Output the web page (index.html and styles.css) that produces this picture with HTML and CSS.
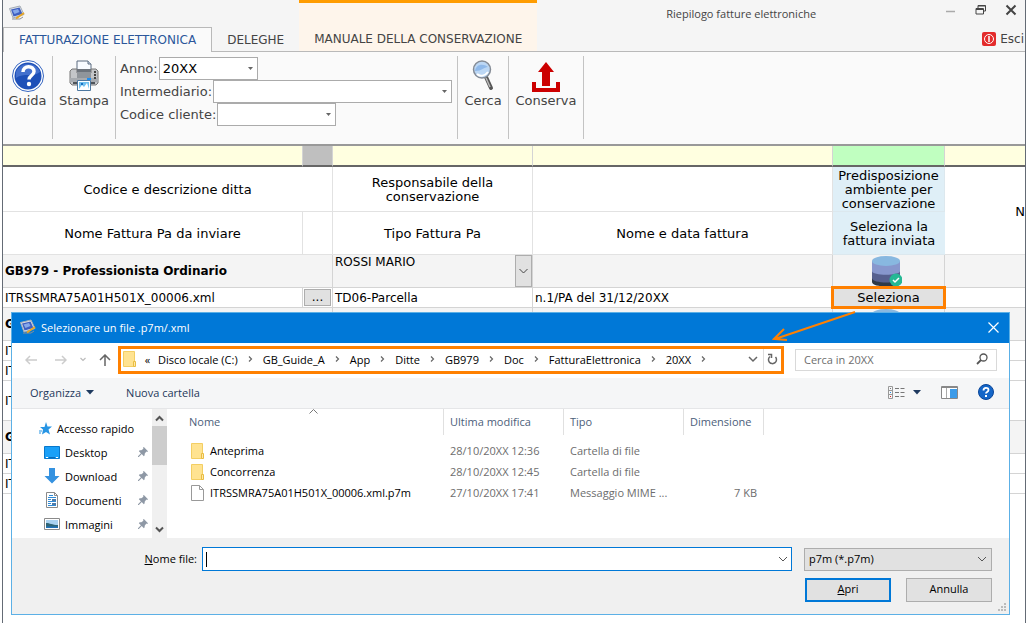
FILE: index.html
```html
<!DOCTYPE html>
<html lang="it">
<head>
    <meta charset="UTF-8">
    <meta name="viewport" content="width=device-width, initial-scale=1.0">
    <title>Riepilogo fatture elettroniche</title>
    <link rel="stylesheet" href="styles.css">
</head>
<body>
    <!-- Shared symbols -->
    <svg class="symbols" aria-hidden="true">
        <symbol id="app" viewBox="0 0 16 16">
            <path d="M.5 3.500 11 1l4 8.500L4 13z" fill="#dfe4ea" stroke="#a4acb5"/>
            <path d="M2 4.500 10.500 2.500 13.500 9 4.500 11.500z" fill="#3f5fc0"/>
            <path d="M3.500 5.500 9 4l1.500 3-5 2z" fill="#86a8ea"/>
            <path d="M3 14h8l3-2" fill="none" stroke="#8b8f96"/>
            <path d="M7 13.500 15 8" stroke="#e8a727" stroke-width="2"/>
        </symbol>
        <symbol id="folder" viewBox="0 0 14 16">
            <path d="M.5.5h11v15H.5z" fill="#ffe391" stroke="#f3ce63"/>
            <path d="M10.500 15.500v-5h2v5z" fill="#ffe9a8" stroke="#e9bd42"/>
        </symbol>
        <symbol id="crumb" viewBox="0 0 5 6">
            <path d="M1 .5 3.500 3 1 5.500" fill="none" stroke="#666" stroke-width="1.200"/>
        </symbol>
        <symbol id="pin" viewBox="0 0 12 12">
            <path d="M7 0l5 5-1 1-1-.5L8 8v2l-1 1-2.500-2.500L1 12H0v-1l3.500-3.500L1 5l1-1h2l2.500-2L6 1z" fill="#8e98a5"/>
        </symbol>
        <symbol id="database" viewBox="0 0 32 32">
            <path d="M2 23v4c0 6 28 6 28 0v-5z" fill="#2e3a47"/>
            <path d="M2 16v7c0 6 28 6 28 0v-7z" fill="#56608f"/>
            <path d="M2 6v10c0 5 28 5 28 0V6z" fill="#8797cd"/>
            <ellipse cx="16" cy="6" rx="14" ry="5" fill="#88b8e0"/>
            <circle cx="26" cy="25" r="6.500" fill="#25b894"/>
            <path d="M23 25l2 2 4-4" fill="none" stroke="#fff" stroke-width="1.500"/>
        </symbol>
    </svg>

    <div class="window">
        <header class="titlebar">
            <div class="title-left">
                <svg class="app-icon"><use href="#app"/></svg>
                <nav class="tabs">
                    <a href="#" class="tab active">FATTURAZIONE ELETTRONICA</a>
                    <a href="#" class="tab">DELEGHE</a>
                </nav>
            </div>
            <a href="#" class="tab manual">MANUALE DELLA CONSERVAZIONE</a>
            <h1>Riepilogo fatture elettroniche</h1>
            <div class="title-right">
                <div class="controls">
                    <button aria-label="Riduci a icona"><svg width="12" height="12"><path d="M1 7.500h9" stroke="#aaa" stroke-width="1.500"/></svg></button>
                    <button aria-label="Ripristina"><svg width="12" height="12"><path d="M1 4.500h7.500v5.500H1zM3 4V1.500h7.500V7H9M1 5.500h7.500M3 2h7.500" fill="none" stroke="#444"/></svg></button>
                    <button aria-label="Chiudi"><svg width="12" height="12"><path d="M1.500 1.500l9 9m0-9l-9 9" stroke="#444" stroke-width="2"/></svg></button>
                </div>
                <button class="exit">
                    <svg width="14" height="14"><rect width="14" height="14" rx="2" fill="#e32b2b"/><circle cx="7" cy="7" r="4.500" fill="none" stroke="#fff"/><path d="M7 4v6" stroke="#fff" stroke-width="1.500"/></svg>
                    Esci
                </button>
            </div>
        </header>

        <div class="ribbon">
            <button class="tool guide">
                <svg viewBox="0 0 32 32">
                    <circle cx="16" cy="16" r="15.500" fill="#fff" stroke="#3565c0"/>
                    <circle cx="16" cy="16" r="13.500" fill="#1e50b8"/>
                    <path d="M4 12a13 13 0 0 1 24 0c-8 6-16 0-24 6z" fill="#5c86da" opacity=".6"/>
                    <path d="M11 12c0-7 11-7 11-.500 0 4-5 4-5 8" fill="none" stroke="#fff" stroke-width="3.500"/>
                    <circle cx="17" cy="24" r="2.200" fill="#fff"/>
                </svg>
                Guida
            </button>
            <button class="tool print">
                <svg viewBox="0 0 32 32">
                    <path d="M9 1h11l3 3v9H9z" fill="#f8fbff" stroke="#5c6c80"/>
                    <path d="M20 1v3h3" fill="#ccd8e8" stroke="#5c6c80"/>
                    <path d="M2 11l2-2h5v4h14V9h5l2 2v12l-2 2H4l-2-2z" fill="#c4c6c9" stroke="#777"/>
                    <path d="M9 9h14v9H9z" fill="#90959b"/>
                    <path d="M9 9h14v3H9z" fill="#6d737b"/>
                    <path d="M2 18h28v4H2z" fill="#a7abb0"/>
                    <path d="M5 22h22v2H5z" fill="#4f545a"/>
                    <path d="M9.500 20.500h13v10h-13z" fill="#fff" stroke="#4d779f"/>
                    <path d="M11 22h10v7H11z" fill="#6fc0f0"/>
                    <path d="M11 29l3-4 2 2 3-4 2 6z" fill="#fff"/>
                    <path d="M13 23h2v2h-2z" fill="#1c70c0"/>
                    <path d="M27 11v2m0 1v2m0 1v2" stroke="#444" stroke-width="2"/>
                    <path d="M19 19h4" stroke="#1f8df0" stroke-width="2"/>
                </svg>
                Stampa
            </button>
            <form class="filters">
                <div class="field">
                    <label for="anno">Anno:</label>
                    <select id="anno" class="combo combo-year"><option>20XX</option></select>
                </div>
                <div class="field">
                    <label for="intermediario">Intermediario:</label>
                    <select id="intermediario" class="combo combo-agent"><option></option></select>
                </div>
                <div class="field">
                    <label for="cliente">Codice cliente:</label>
                    <select id="cliente" class="combo combo-client"><option></option></select>
                </div>
            </form>
            <button class="tool search">
                <svg viewBox="0 0 32 32">
                    <path d="M19 17l5 11" stroke="#555" stroke-width="4" stroke-linecap="round"/>
                    <path d="M19 18l4 9" stroke="#bbb" stroke-width="1.500"/>
                    <circle cx="15" cy="9.500" r="8.500" fill="#bcd7f4" stroke="#858c96" stroke-width="1.500"/>
                    <path d="M8 11c1-7 8-8 13-4-4 0-6 4-13 4z" fill="#8fb9ea"/>
                    <path d="M10 14c3 3 8 2 11-2" fill="none" stroke="#fff" stroke-width="2"/>
                </svg>
                Cerca
            </button>
            <button class="tool keep">
                <svg viewBox="0 0 32 32">
                    <path d="M16 2l8 10h-4v14h-8V12H8z" fill="#c00"/>
                    <path d="M2 22h4v6h20v-6h4v10H2z" fill="#c00"/>
                </svg>
                Conserva
            </button>
        </div>

        <table class="invoices">
            <colgroup>
                <col class="col-name"><col class="col-more"><col class="col-type"><col class="col-date"><col class="col-select"><col>
            </colgroup>
            <thead>
                <tr class="strip"><td></td><td class="grey"></td><td></td><td></td><td class="green"></td><td></td></tr>
                <tr class="head head-top">
                    <th colspan="2">Codice e descrizione ditta</th>
                    <th>Responsabile della conservazione</th>
                    <th></th>
                    <th class="blue">Predisposizione ambiente per conservazione</th>
                    <th rowspan="2" class="last">N</th>
                </tr>
                <tr class="head">
                    <th>Nome Fattura Pa da inviare</th>
                    <th></th>
                    <th>Tipo Fattura Pa</th>
                    <th>Nome e data fattura</th>
                    <th class="blue">Seleziona la fattura inviata</th>
                </tr>
            </thead>
            <tbody>
                <tr class="company">
                    <td colspan="2">GB979 - Professionista Ordinario</td>
                    <td class="owner"><div><span>ROSSI MARIO</span><button aria-label="Scegli responsabile"><svg width="9" height="6"><path d="M.5 1l4 4 4-4" fill="none" stroke="#444"/></svg></button></div></td>
                    <td></td>
                    <td class="db"><svg><use href="#database"/></svg></td>
                    <td></td>
                </tr>
                <tr class="invoice">
                    <td>ITRSSMRA75A01H501X_00006.xml</td>
                    <td class="more"><button>...</button></td>
                    <td>TD06-Parcella</td>
                    <td>n.1/PA del 31/12/20XX</td>
                    <td class="pick"><button>Seleziona</button></td>
                    <td></td>
                </tr>
                <tr class="company"><td colspan="2">G</td><td></td><td></td><td class="db"><svg><use href="#database"/></svg></td><td></td></tr>
                <tr class="invoice"><td>IT</td><td></td><td></td><td></td><td></td><td></td></tr>
                <tr class="invoice"><td>IT</td><td></td><td></td><td></td><td></td><td></td></tr>
                <tr class="invoice tall"><td>IT</td><td></td><td></td><td></td><td></td><td></td></tr>
                <tr class="company"><td colspan="2">G</td><td></td><td></td><td></td><td></td></tr>
                <tr class="invoice"><td>IT</td><td></td><td></td><td></td><td></td><td></td></tr>
                <tr class="invoice"><td>IT</td><td></td><td></td><td></td><td></td><td></td></tr>
            </tbody>
        </table>
    </div>

    <!-- File picker, floating over the table -->
    <section class="dialog" role="dialog" aria-labelledby="dialogTitle">
        <div class="dialog-title">
            <svg class="app-icon"><use href="#app"/></svg>
            <h2 id="dialogTitle">Selezionare un file .p7m/.xml</h2>
            <button aria-label="Chiudi"><svg width="11" height="11"><path d="M.5.5l10 10m0-10l-10 10" stroke="#fff" stroke-width="1.200"/></svg></button>
        </div>

        <div class="address-row">
            <div class="history">
                <button aria-label="Indietro" disabled><svg width="12" height="10"><path d="M12 5H1m4-4L1 5l4 4" fill="none" stroke="#ccc" stroke-width="1.500"/></svg></button>
                <button aria-label="Avanti" disabled><svg width="12" height="10"><path d="M0 5h11M7 1l4 4-4 4" fill="none" stroke="#ccc" stroke-width="1.500"/></svg></button>
                <button class="recent" aria-label="Percorsi recenti"><svg width="6" height="5"><path d="M.5 1L3 3.500 5.500 1" fill="none" stroke="#bbb" stroke-width="1.200"/></svg></button>
                <button class="up" aria-label="Su"><svg width="12" height="12"><path d="M6 12V1M1 6l5-5 5 5" fill="none" stroke="#666" stroke-width="1.500"/></svg></button>
            </div>
            <div class="address">
                <svg class="folder"><use href="#folder"/></svg>
                <span class="back">«</span>
                <a href="#">Disco locale (C:)</a><svg class="crumb"><use href="#crumb"/></svg>
                <a href="#">GB_Guide_A</a><svg class="crumb"><use href="#crumb"/></svg>
                <a href="#">App</a><svg class="crumb"><use href="#crumb"/></svg>
                <a href="#">Ditte</a><svg class="crumb"><use href="#crumb"/></svg>
                <a href="#">GB979</a><svg class="crumb"><use href="#crumb"/></svg>
                <a href="#">Doc</a><svg class="crumb"><use href="#crumb"/></svg>
                <a href="#">FatturaElettronica</a><svg class="crumb"><use href="#crumb"/></svg>
                <a href="#">20XX</a><svg class="crumb"><use href="#crumb"/></svg>
                <button class="drop" aria-label="Percorsi precedenti"><svg width="10" height="7"><path d="M1 1l4 4 4-4" fill="none" stroke="#666" stroke-width="1.500"/></svg></button>
                <button class="reload" aria-label="Aggiorna"><svg width="11" height="12"><path d="M8.500 4A4 4 0 1 1 3 3.500M1 1.500h3.500V5" fill="none" stroke="#666" stroke-width="1.500"/></svg></button>
            </div>
            <div class="find">
                <input type="text" placeholder="Cerca in 20XX" aria-label="Cerca in 20XX">
                <svg width="12" height="12"><circle cx="7.500" cy="4.500" r="3.500" fill="none" stroke="#555" stroke-width="1.300"/><path d="M5 7L1 11" stroke="#555" stroke-width="1.800"/></svg>
            </div>
        </div>

        <div class="toolbar">
            <button class="organize">Organizza <svg width="8" height="5"><path d="M0 0h8L4 4.500z" fill="#1e3a5f"/></svg></button>
            <button>Nuova cartella</button>
            <div class="view-tools">
                <button aria-label="Visualizza">
                    <svg width="17" height="13"><path d="M.5.500h4v12h-4zM.5 4.500h4m-4 4h4" fill="none" stroke="#999"/><path d="M7 2.500h4m1.500 0h4M7 6.500h4m1.500 0h4M7 10.500h4m1.500 0h4" stroke="#777"/><path d="M2 2h1v1H2z" fill="#777"/><path d="M2 6h1v1H2z" fill="#2b8ce0"/><path d="M2 10h1v1H2z" fill="#d22"/></svg>
                </button>
                <button class="view-drop" aria-label="Altre opzioni"><svg width="8" height="5"><path d="M0 0h8L4 4.500z" fill="#1e3a5f"/></svg></button>
                <button class="preview" aria-label="Riquadro di anteprima">
                    <svg width="17" height="13"><path d="M.5.5h16v12H.5z" fill="#fff" stroke="#888"/><path d="M1 1.500h15" stroke="#888"/><path d="M5.500 2v10" stroke="#aaa"/><path d="M9 3h7v9H9z" fill="#3c9be8"/></svg>
                </button>
                <button aria-label="Guida">
                    <svg width="16" height="16"><circle cx="8" cy="8" r="7.500" fill="#1466c8" stroke="#0b4698"/><path d="M5.500 6.500c0-3.500 5-3.500 5-.500 0 2-2.500 2-2.500 3.500" fill="none" stroke="#fff" stroke-width="1.800"/><path d="M7 11h2v2H7z" fill="#fff"/></svg>
                </button>
            </div>
        </div>

        <div class="browser">
            <ul class="places">
                <li class="quick"><svg width="13" height="13"><path d="M7 0l1.500 4.500H13L9.500 7.500 11 12.500 7 10l-4 2.500 1-5L1 5h4.500z" fill="#2795e4"/><path d="M0 9h3M0 11h2" stroke="#2795e4"/></svg><span>Accesso rapido</span></li>
                <li><svg width="16" height="13"><path d="M.5.5h15v12H.5z" fill="#1aa0f8" stroke="#0878cc"/><path d="M2 11.500h2m8 0h2" stroke="#fff"/><path d="M5 11.500h6" stroke="#0b6cbc"/></svg><span>Desktop</span><svg class="pin"><use href="#pin"/></svg></li>
                <li><svg width="16" height="16"><path d="M5 0h6v8h4.500L8 15.500.5 8H5z" fill="#3592e0"/></svg><span>Download</span><svg class="pin"><use href="#pin"/></svg></li>
                <li><svg width="16" height="16"><path d="M2.500.5h8l3 3v12h-11z" fill="#fff" stroke="#8a8a8a"/><path d="M10.500.5v3h3" fill="none" stroke="#8a8a8a"/><path d="M5 3.500h4M4 5.500h8M4 7.500h3M4 9.500h8M4 11.500h3M4 13.500h8" stroke="#2e8ad6"/><path d="M8 7h4v2H8zM8 11h4v2H8z" fill="#4e79a6"/></svg><span>Documenti</span><svg class="pin"><use href="#pin"/></svg></li>
                <li><svg width="16" height="12"><path d="M.5.5h15v11H.5z" fill="#fff" stroke="#8a8a8a"/><path d="M2 2h12v8H2z" fill="#a9d2f1"/><path d="M2 5c4 0 6 2 12 2v3H2z" fill="#2f6577"/><path d="M2 8.500h12V10H2z" fill="#1e72bb"/></svg><span>Immagini</span><svg class="pin"><use href="#pin"/></svg></li>
            </ul>
            <div class="scrollbar">
                <svg width="9" height="7"><path d="M1 5.500L4.500 2 8 5.500" fill="none" stroke="#555" stroke-width="2"/></svg>
                <div class="thumb"></div>
                <svg width="9" height="7"><path d="M1 1.500L4.500 5 8 1.500" fill="none" stroke="#555" stroke-width="2"/></svg>
            </div>
            <div class="list">
                <svg class="sort" width="9" height="5"><path d="M.5 4.500l4-4 4 4" fill="none" stroke="#777"/></svg>
                <table class="files">
                    <colgroup><col class="f-name"><col class="f-date"><col class="f-date"><col class="f-size"><col></colgroup>
                    <thead>
                        <tr><th>Nome</th><th>Ultima modifica</th><th>Tipo</th><th>Dimensione</th><td></td></tr>
                    </thead>
                    <tbody>
                        <tr><td><div class="file"><svg class="folder"><use href="#folder"/></svg>Anteprima</div></td><td>28/10/20XX 12:36</td><td>Cartella di file</td><td></td><td></td></tr>
                        <tr><td><div class="file"><svg class="folder"><use href="#folder"/></svg>Concorrenza</div></td><td>28/10/20XX 12:45</td><td>Cartella di file</td><td></td><td></td></tr>
                        <tr><td><div class="file"><svg class="folder" viewBox="0 0 14 16"><path d="M.5.5h8l4 4v11H.5z" fill="#fff" stroke="#999"/><path d="M8.500.5v4h4" fill="none" stroke="#999"/></svg>ITRSSMRA75A01H501X_00006.xml.p7m</div></td><td>27/10/20XX 17:41</td><td>Messaggio MIME ...</td><td class="size">7 KB</td><td></td></tr>
                    </tbody>
                </table>
            </div>
        </div>

        <form class="dialog-footer">
            <label for="nomeFile"><u>N</u>ome file:</label>
            <div class="file-name">
                <span class="caret"></span>
                <input type="text" id="nomeFile">
                <svg width="10" height="6"><path d="M1 1l4 4 4-4" fill="none" stroke="#555"/></svg>
            </div>
            <select class="file-type" aria-label="Tipo di file"><option>p7m (*.p7m)</option></select>
            <div class="actions">
                <button type="button" class="btn primary"><u>A</u>pri</button>
                <button type="button" class="btn">Annulla</button>
            </div>
        </form>
        <svg class="grip" width="9" height="9"><path d="M6 0h2v2H6zM3 3h2v2H3zM6 3h2v2H6zM0 6h2v2H0zM3 6h2v2H3zM6 6h2v2H6z" fill="#bbb"/></svg>
    </section>

    <!-- Arrow from the Seleziona button to the address bar -->
    <svg class="arrow" width="84" height="32"><path d="M83 1L3 28M12 18L2 28l13 1" fill="none" stroke="#ff8000" stroke-width="2"/></svg>
</body>
</html>
```
FILE: styles.css
```css
* {
    margin: 0;
    padding: 0;
    box-sizing: border-box;
}

body {
    position: relative;
    min-height: 100vh;
    background: #fff;
    font-family: "DejaVu Sans", Verdana, sans-serif;
    font-size: 12px;
    color: #000;
    overflow: hidden;
}

button,
input,
select {
    font: inherit;
    color: inherit;
    background: none;
    border: none;
    border-radius: 0;
    outline: none;
}

select {
    appearance: none;
}

a {
    color: inherit;
    text-decoration: none;
}

svg {
    display: block;
    flex: none;
}

.symbols {
    position: absolute;
    width: 0;
    height: 0;
}

.window {
    min-height: 100vh;
    margin-left: 2px;
    border-left: 1px solid #646b75;
    border-right: 1px solid #646b75;
}

/* Title bar and tabs */
.titlebar {
    display: flex;
    height: 52px;
    background: #f5f5f5;
    border-bottom: 1px solid #b9b9b9;
}

.title-left {
    display: flex;
    flex-direction: column;
    justify-content: space-between;
}

.app-icon {
    width: 16px;
    height: 16px;
}

.title-left .app-icon {
    margin: 5px 0 0 6px;
}

.tabs {
    display: flex;
    margin-bottom: -1px;
}

.tab {
    display: flex;
    align-items: center;
    height: 25px;
    padding: 0 15px;
    color: #444;
    white-space: nowrap;
}

.tab.active {
    color: #2b579a;
    background: #fafafa;
    border: 1px solid #b9b9b9;
    border-bottom: none;
}

.tab.manual {
    height: 51px;
    padding-top: 24px;
    background: #fef5eb;
    border-top: 3px solid #ff9c00;
}

.titlebar h1 {
    flex: 1;
    padding-top: 6px;
    font: 11px/16px "Open Sans", sans-serif;
    color: #444;
    text-align: center;
}

.title-right {
    display: flex;
    flex-direction: column;
    align-items: flex-end;
    gap: 16px;
}

.controls {
    display: flex;
    gap: 18px;
    padding: 4px 8px 0 0;
}

.exit {
    display: flex;
    align-items: center;
    gap: 4px;
    padding-right: 1px;
    color: #444;
}

/* Ribbon */
.ribbon {
    display: flex;
    height: 94px;
    padding: 4px 0 5px;
    background: #fafafa;
    border-bottom: 2px solid #999;
}

.tool,
.filters {
    border-right: 1px solid #c3c3c3;
}

.tool {
    display: flex;
    flex-direction: column;
    align-items: center;
    gap: 1px;
    padding-top: 4px;
    font-size: 13px;
    color: #444;
}

.tool svg {
    width: 32px;
    height: 32px;
}

.guide {
    width: 50px;
}

.search {
    width: 51px;
}

.print {
    width: 63px;
}

.keep {
    width: 75px;
}

.filters {
    width: 342px;
    padding: 1px 0 0 4px;
    font-size: 13px;
    color: #444;
}

.field {
    display: flex;
    align-items: center;
    gap: 1px;
    height: 23px;
}

.combo {
    height: 23px;
    padding: 0 3px;
    color: #000;
    border: 1px solid #ababab;
    background: #fff url("data:image/svg+xml,%3Csvg xmlns='http://www.w3.org/2000/svg' width='5' height='3'%3E%3Cpath d='M0 0h5L2.500 3z' fill='%23666'/%3E%3C/svg%3E") no-repeat right 4px center;
}

.combo-year {
    width: 99px;
}

.combo-agent {
    width: 239px;
}

.combo-client {
    width: 119px;
}

/* Invoice table */
.invoices {
    width: 100%;
    table-layout: fixed;
    border-collapse: separate;
    border-spacing: 0;
}

.col-name {
    width: 300px;
}

.col-more {
    width: 30px;
}

.col-type {
    width: 200px;
}

.col-date {
    width: 300px;
}

.col-select {
    width: 112px;
}

.invoices td,
.invoices th {
    height: 20px;
    padding: 0 2px;
    border-right: 1px solid #d4d4d4;
    border-bottom: 1px solid #d4d4d4;
    white-space: nowrap;
}

.invoices tr > :last-child {
    border-right: none;
}

.invoices .strip td {
    height: 21px;
    background: #ffffe0;
    border-bottom: 2px solid #666;
}

.invoices .strip .grey {
    background: #bfbfbf;
}

.invoices .strip .green {
    background: #c0ffc0;
}

.invoices .head th {
    height: 43px;
    padding-top: 2px;
    font-size: 13px;
    font-weight: normal;
    line-height: 14px;
    text-align: center;
    white-space: normal;
    border-color: #e2e2e2;
}

.invoices .head-top th {
    height: 45px;
}

.invoices .head .blue {
    padding: 2px 0 0;
    background: #dfeff7;
    border-color: #dce8ee;
}

.invoices .head .last {
    padding: 2px 0 0;
    border-right: none;
    text-align: right;
}

.invoices .company td {
    height: 33px;
    background: #f4f4f4;
    font-weight: bold;
}

.invoices .company .owner {
    padding: 0;
    font-weight: normal;
}

.owner div {
    display: flex;
    justify-content: space-between;
    height: 32px;
    padding-left: 2px;
}

.owner button {
    display: grid;
    place-items: center;
    width: 17px;
    background: #e1e1e1;
    border: 1px solid #adadad;
}

.invoices .db {
    padding: 0 5px 0 0;
}

.db svg {
    width: 32px;
    height: 32px;
    margin: 0 auto;
}

.invoices .tall td {
    height: 40px;
}

.invoices .more,
.invoices .pick {
    padding: 0;
}

.more button {
    display: block;
    width: 27px;
    height: 17px;
    margin: 0 auto;
    line-height: 13px;
    background: #e1e1e1;
    border: 1px solid #adadad;
}

.pick button {
    display: block;
    width: 100%;
    height: 19px;
    font-size: 13px;
    line-height: 14px;
    background: #e1e1e1;
    border: 1px solid #adadad;
    outline: 3px solid #ff8000;
    outline-offset: -1px;
    box-shadow: 0 3px #000;
}

/* File dialog */
.dialog {
    position: absolute;
    top: 312px;
    left: 11px;
    right: 16px;
    background: #fff;
    border: 1px solid #5cb0e6;
    font-family: "Open Sans", sans-serif;
    font-size: 11px;
}

.dialog-title {
    display: flex;
    align-items: center;
    height: 30px;
    padding: 0 10px 2px 8px;
    gap: 5px;
    color: #fff;
    background: #0078d7;
}

.dialog-title h2 {
    flex: 1;
    font-size: 11px;
    font-weight: normal;
}

.address-row {
    display: flex;
    align-items: center;
    height: 35px;
    padding: 0 12px 2px;
}

.history {
    display: flex;
    align-items: center;
    width: 94px;
    gap: 18px;
    padding-left: 1px;
}

.history .recent,
.history .up {
    margin-left: -5px;
}

.address {
    flex: 1;
    display: flex;
    align-items: center;
    height: 28px;
    padding: 0 0 1px 2px;
    border: 3px solid #ff8000;
    white-space: nowrap;
}

.folder {
    width: 14px;
    height: 16px;
}

.back {
    width: 21px;
    text-align: center;
}

.crumb {
    width: 5px;
    height: 6px;
    margin: 0 10px;
}

.drop {
    margin-left: auto;
    padding: 0 5px;
}

.reload {
    display: grid;
    place-items: center;
    width: 18px;
    height: 100%;
    border-left: 1px solid #ddd;
}

.find {
    display: flex;
    align-items: center;
    width: 202px;
    height: 22px;
    margin-left: 11px;
    padding: 0 8px 1px;
    border: 1px solid #d9d9d9;
}

.find input {
    flex: 1;
    min-width: 0;
}

.find input::placeholder {
    color: #6d6d6d;
}

.toolbar {
    display: flex;
    align-items: center;
    gap: 32px;
    height: 31px;
    padding: 0 15px 2px 18px;
    color: #1e395b;
    background: #f5f6f7;
    border-bottom: 1px solid #e5e6e8;
}

.organize {
    display: flex;
    align-items: center;
    gap: 5px;
}

.view-tools {
    display: flex;
    align-items: center;
    gap: 20px;
    margin-left: auto;
}

.view-tools .view-drop {
    margin-left: -12px;
}

.browser {
    display: flex;
    height: 129px;
}

.places {
    width: 140px;
    padding: 7px 4px 0 32px;
    list-style: none;
}

.places li {
    display: flex;
    align-items: center;
    gap: 5px;
    height: 24px;
}

.places .quick {
    margin-left: -5px;
}

.pin {
    width: 10px;
    height: 10px;
    margin-left: auto;
}

.scrollbar {
    display: flex;
    flex-direction: column;
    align-items: center;
    width: 15px;
    padding: 6px 0 5px;
    background: #f0f0f0;
}

.thumb {
    width: 15px;
    height: 39px;
    margin: 4px 0 auto;
    background: #cdcdcd;
}

.list {
    position: relative;
    flex: 1;
}

/* Ascending mark over the Nome column */
.sort {
    position: absolute;
    top: 0;
    left: 142px;
}

.files {
    width: 100%;
    table-layout: fixed;
    border-collapse: collapse;
    color: #6d6d6d;
}

.f-name {
    width: 277px;
}

.f-date {
    width: 120px;
}

.f-size {
    width: 80px;
}

.files th {
    height: 31px;
    padding: 0 6px 6px;
    font-weight: normal;
    text-align: left;
    color: #4c607a;
    background: linear-gradient(#e0e0e0, #e0e0e0) no-repeat right top / 1px 26px;
}

.files th:first-child {
    padding-left: 22px;
}

.files td {
    height: 21px;
    padding: 0 6px;
    white-space: nowrap;
}

.files td:first-child {
    padding-left: 24px;
}

.files .size {
    padding-right: 7px;
    text-align: right;
}

.file {
    display: flex;
    align-items: center;
    gap: 5px;
    color: #000;
}

.dialog-footer {
    display: grid;
    grid-template-columns: 185px 1fr 188px;
    column-gap: 5px;
    row-gap: 6px;
    align-items: center;
    height: 76px;
    padding: 9px 17px 12px 0;
    background: #f0f0f0;
}

.dialog-footer label {
    padding-bottom: 2px;
    text-align: right;
}

.file-name {
    display: flex;
    align-items: center;
    height: 24px;
    margin-right: 7px;
    padding: 0 3px;
    background: #fff;
    border: 1px solid #0078d7;
}

.file-name input {
    flex: 1;
    min-width: 0;
}

/* Text cursor */
.caret {
    width: 1px;
    height: 15px;
    background: #000;
}

.file-type {
    height: 23px;
    padding: 0 4px 1px;
    border: 1px solid #adadad;
    background: #e1e1e1 url("data:image/svg+xml,%3Csvg xmlns='http://www.w3.org/2000/svg' width='10' height='6'%3E%3Cpath d='M1 1l4 4 4-4' fill='none' stroke='%23555'/%3E%3C/svg%3E") no-repeat right 4px center;
}

.actions {
    grid-column: 3;
    display: flex;
    justify-content: space-between;
    padding-left: 1px;
}

.btn {
    width: 86px;
    height: 24px;
    padding-bottom: 2px;
    background: #e1e1e1;
    border: 1px solid #adadad;
}

.btn.primary {
    border: 2px solid #0078d7;
}

.grip {
    position: absolute;
    right: 2px;
    bottom: 2px;
}

.arrow {
    position: absolute;
    top: 311px;
    right: 170px;
}
```
